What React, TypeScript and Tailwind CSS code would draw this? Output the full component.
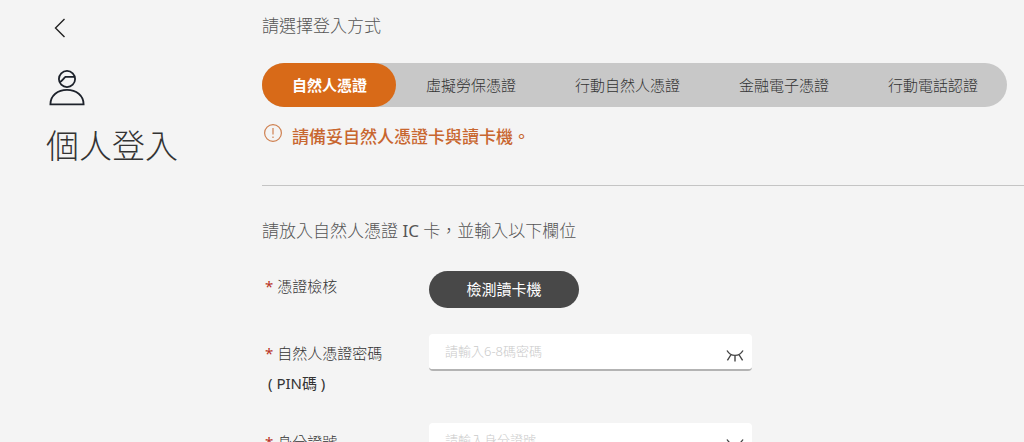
import { useState } from "react";

const tabs = ["自然人憑證", "虛擬勞保憑證", "行動自然人憑證", "金融電子憑證", "行動電話認證"];

function ClosedEyeIcon() {
  return (
    <svg width="18" height="14" viewBox="0 0 18 14" fill="none" stroke="#444" strokeWidth="1.4" aria-hidden="true">
      <path d="M1 1.5C3 4.8 5.8 6.4 9 6.4S15 4.8 17 1.5M9 6.4V12.6M4.8 6L1.4 11.4M13.2 6L16.6 11.4" />
    </svg>
  );
}

function PersonIcon() {
  return (
    <svg width="36" height="36" viewBox="0 0 36 36" fill="none" stroke="#1d222b" strokeWidth="1.8" aria-hidden="true">
      <circle cx="18" cy="9" r="8.1" />
      <path d="M10.6 12.2C13.2 11 14.4 8.6 16.4 6.8H25.6" />
      <path d="M1.4 34.3C1.4 25.6 8.8 19.8 18 19.8S34.6 25.6 34.6 34.3Z" />
    </svg>
  );
}

function SecretField({ id, label, note, placeholder }: { id: string; label: string; note?: string; placeholder: string }) {
  const [visible, setVisible] = useState(false);
  return (
    <div className="flex items-start">
      <label htmlFor={id} className="w-[164px] shrink-0 pt-1 text-[15px] leading-[30px] text-[#333]">
        <span className="font-normal text-[#b8321f]">*</span> {label}
        {note && <span className="block pl-[3px] font-normal">{note}</span>}
      </label>
      <div className="flex h-[37px] w-full max-w-[323px] items-center rounded-[4px] border-b-2 border-[#b3b3b3] bg-white pr-2 pl-4">
        <input
          id={id}
          type={visible ? "text" : "password"}
          placeholder={placeholder}
          className="min-w-0 flex-1 bg-transparent text-[13px] text-[#333] outline-none placeholder:text-[#cacaca]"
        />
        <button type="button" aria-label="顯示或隱藏" onClick={() => setVisible(!visible)} className="pt-2">
          <ClosedEyeIcon />
        </button>
      </div>
    </div>
  );
}

export default function App() {
  const [active, setActive] = useState(0);
  return (
    <div
      lang="zh-Hant"
      className="flex min-h-screen bg-[#f4f4f4] font-['Noto_Sans','Noto_Sans_CJK_TC',sans-serif] font-light"
    >
      <aside className="flex w-[262px] shrink-0 flex-col items-start pt-[18px] pl-[46px]">
        <button type="button" aria-label="返回" className="ml-2">
          <svg width="12" height="20" viewBox="0 0 12 20" fill="none" stroke="#222" strokeWidth="1.4" aria-hidden="true">
            <path d="M10.5 1L1.5 10L10.5 19" />
          </svg>
        </button>
        <div className="mt-8 ml-[3px]">
          <PersonIcon />
        </div>
        <h1 className="mt-5 text-[33px] leading-10 font-light whitespace-nowrap text-[#333]">個人登入</h1>
      </aside>

      <main className="min-w-0 flex-1 pt-[14px]">
        <h2 className="text-[17px] leading-6 font-light text-[#555]">請選擇登入方式</h2>

        <div role="tablist" className="mt-[25px] flex h-11 w-fit rounded-full bg-[#c8c8c8]">
          {tabs.map((tab, i) => (
            <button
              key={tab}
              type="button"
              role="tab"
              aria-selected={i === active}
              onClick={() => setActive(i)}
              className={
                i === active
                  ? "rounded-full bg-[#d86a18] pr-[29px] pl-[30px] text-[15px] font-bold whitespace-nowrap text-white"
                  : "rounded-full pr-[29px] pl-[30px] text-[15px] whitespace-nowrap text-[#333]"
              }
            >
              {tab}
            </button>
          ))}
        </div>

        <p className="mt-4 flex items-start gap-[9px] text-[17px] leading-7 font-medium text-[#c8662f]">
          <svg width="20" height="20" viewBox="0 0 20 20" fill="none" stroke="#cf8050" strokeWidth="1.2" className="ml-px" aria-hidden="true">
            <circle cx="10" cy="10" r="8.4" />
            <path d="M10 5V11.6M10 13.4V15" />
          </svg>
          請備妥自然人憑證卡與讀卡機。
        </p>

        <hr className="mt-[34px] border-[#c4c4c4]" />

        <h3 className="mt-[31px] text-[17px] leading-7 font-light text-[#555]">
          請放入自然人憑證 <span className="font-normal">IC</span> 卡，並輸入以下欄位
        </h3>

        <form className="mt-[26px] flex flex-col gap-[25px] pl-[3px]">
          <div className="flex min-h-[38px] items-start">
            <span id="reader-label" className="w-[164px] shrink-0 text-[15px] leading-[30px] text-[#333]">
              <span className="font-normal text-[#b8321f]">*</span> 憑證檢核
            </span>
            <button
              type="button"
              aria-describedby="reader-label"
              className="h-[37px] w-[150px] rounded-full bg-[#484848] text-[15px] font-normal text-white"
            >
              檢測讀卡機
            </button>
          </div>
          <SecretField id="pin" label="自然人憑證密碼" note="( PIN碼 )" placeholder="請輸入6-8碼密碼" />
          <SecretField id="national-id" label="身分證號" placeholder="請輸入身分證號" />
        </form>
      </main>
    </div>
  );
}
